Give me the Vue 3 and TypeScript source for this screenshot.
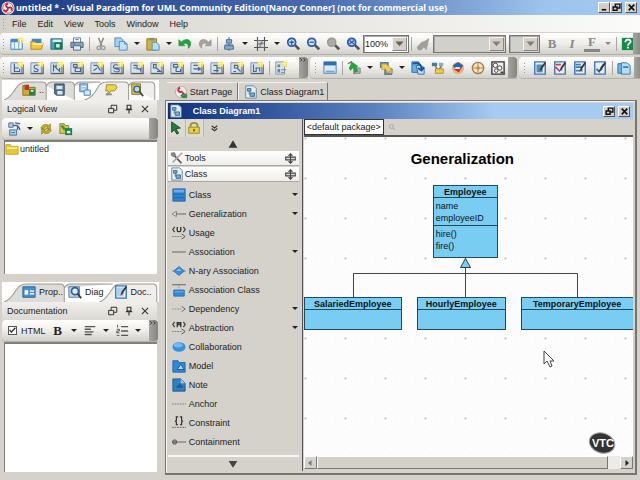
<script setup lang="ts">
import { h, ref } from 'vue'

type Tool = { icon?: string; label?: string; kind?: 'arrow' | 'sep' }

const spark = '<path d="M9 1h6v6l-3-1-3-1z" fill="#f3e25a"/><path d="M12 0v6M9 3h6" stroke="#fff7a8"/>'
const sheet = (inner: string) =>
  `<path d="M1 2h12v12H1z" fill="#d3e2f0" stroke="#7688a0"/><path d="M1 14.5h14V4" fill="none" stroke="#5d6165" stroke-width="1.5"/>${inner}${spark}`
const bluePage = (inner: string) =>
  `<path d="M2 1h12v14H2z" fill="#e4f0fa" stroke="#3c78b4" stroke-width="1.6"/>${inner}`
const ink = (d: string) => `<path d="${d}" fill="none" stroke="#4a6584" stroke-width="1.3"/>`
const lens = (rim: string, glass: string, mark: string) =>
  `<path d="M10 9l5 5" stroke="#555" stroke-width="3"/><circle cx="6.5" cy="6" r="4.5" fill="${glass}" stroke="${rim}" stroke-width="2"/><path d="${mark}" stroke="${rim}" stroke-width="1.5"/>`
const brush = '<path d="M14 2L9 9" stroke="#333" stroke-width="2"/><path d="M9 8l2 2-4 2z" fill="#7a2c20"/>'

const icons: Record<string, string> = {
  logo: '<circle cx="8" cy="8" r="7.5" fill="#f6e9e9"/><circle cx="8" cy="8" r="6" fill="none" stroke="#c8505a"/><path d="M8 8C5 6 5 4 8 3M8 8c3-2 5 0 4 3M8 8c0 3-3 5-5 2" fill="none" stroke="#c02838" stroke-width="2"/>',
  project: '<path d="M1 3h13v11H1z" fill="#eef6fd" stroke="#2f78ba"/><path d="M1 2h13v4H1z" fill="#3f8fd0"/><path d="M5 6v8M10 6v8" stroke="#6c9cc6"/>' + spark,
  open: '<path d="M2 2h11v6H2z" fill="#3d89c6"/><path d="M1 5h5l1 2h8l-2 7H1z" fill="#f0c93c" stroke="#a8851c"/><path d="M3 8h12" stroke="#fdf0a0" stroke-width="2"/>',
  save: '<path d="M1 2h13v12H1z" fill="#4c9ccc" stroke="#2c6898"/><path d="M3 3h10v3H3z" fill="#d7edfb"/><path d="M5 6h9v8H5z" fill="#128046"/><path d="M7 8h4v4H7z" fill="#d5efdb"/>',
  print: '<path d="M4 1h8v6H4z" fill="#fff" stroke="#557794"/><path d="M1 6h14v6H1z" fill="#8fa6b8" stroke="#4b6072"/><path d="M4 10h8v5H4z" fill="#d9ecfa" stroke="#4b6072"/><path d="M6 3h4M3 8h3" stroke="#3c70a0"/>',
  cut: '<path d="M5 1l4 9M11 1L7 10" stroke="#888" stroke-width="1.6"/><circle cx="5.5" cy="12.5" r="2" fill="none" stroke="#999" stroke-width="1.5"/><circle cx="10.5" cy="12.5" r="2" fill="none" stroke="#999" stroke-width="1.5"/>',
  copy: '<path d="M1 1h7l2 2v8H1z" fill="#a8d2f2" stroke="#4c86b8"/><path d="M6 5h6l3 3v7H6z" fill="#c3e2f8" stroke="#4c86b8"/><path d="M12 5v3h3" fill="none" stroke="#4c86b8"/>',
  paste: '<path d="M1 2h11v13H1z" fill="#d6b23a" stroke="#8c7425"/><path d="M4 1h5v3H4z" fill="#888"/><path d="M7 6h5l3 3v6H7z" fill="#b9dcf5" stroke="#4c86b8"/>',
  undo: '<path d="M1 3v7h7L6 8c3-2 6-1 6 5 5-5 2-11-3-10-2 0-4 1-5 3z" fill="#21a536" stroke="#158026" stroke-width=".6"/>',
  redo: '<path d="M15 3v7H8l2-2C7 6 4 7 4 13-1 8 2 2 7 3c2 0 4 1 5 3z" fill="#a2a2a0" stroke="#8a8a88" stroke-width=".6"/>',
  align: '<path d="M8 0v16M3 9h10" stroke="#47637e"/><path d="M5 3h6v4H5zM3 10h10v4H3z" fill="#7fb0d8" stroke="#47637e"/>',
  grid: '<path d="M4 0v16M12 0v16M0 4h16M0 12h16" stroke="#555" stroke-width="1.3"/><path d="M4 4h5v4H4zM7 7h5v5H7z" fill="#cfd4d8" stroke="#666"/>',
  zoomIn: lens('#2a5ca8', '#cfe5fa', 'M4 6h5M6.5 4v5'),
  zoomOut: lens('#2a5ca8', '#cfe5fa', 'M4 6h5'),
  zoomOff: lens('#9a9a98', '#b0b0ae', 'M5 6h3'),
  zoomFit: lens('#2a5ca8', '#b8d5f2', 'M4 4l5 4M9 4L4 8'),
  painter: '<path d="M15 1L9 5H7l-6 6 1 4h4l3-3 3 3 2-8z" fill="#a0a09e"/>',
  help: '<path d="M1 1h14v14H1z" fill="#138a48"/><path d="M5 6c0-4 6-4 6-1 0 2-3 2-3 5M8 11v2" stroke="#fff" stroke-width="2" fill="none"/>',
  d0: sheet(ink('M5 3v5h5M5 8v4h6v-3')),
  d1: sheet(ink('M10 5c-7-2-6 4-3 4 5 1 1 5-3 2')),
  d2: sheet(ink('M4 12V5l7 7V8M7 4v3')),
  d3: sheet(ink('M4 4h4v3H4zM6 8h6v4H6z')),
  d4: sheet(ink('M4 5h4l4 6M4 11l4-3')),
  d5: sheet(ink('M10 5c-7-3-8 4-3 4 7 0 3 6-3 2M4 8h8')),
  d6: sheet(ink('M4 5h4v4h4v3M4 8h3')),
  d7: sheet(ink('M4 4h3v4H4zM7 8l5 4H8')),
  d8: sheet(ink('M4 4h5v3H4zM7 7v5h5V9')),
  d9: sheet(ink('M4 5h5M4 9h8M9 7l3 2-3 2')),
  d10: sheet(ink('M4 5h4v3h4M4 11h6M8 8v5')),
  d11: sheet(ink('M5 5h4v3H5zM8 8l4 4M4 12h3')),
  d12: sheet(ink('M4 4v8h3V8h4v4')),
  d13: '<path d="M2 1h10v14H2z" fill="#d8e3ec" stroke="#8290a0"/><path d="M4 4h3v3H4zM4 9h3v4H4z" fill="#5a87ac"/><path d="M8 10h6M8 13h4" stroke="#777"/>' + spark,
  panel: '<path d="M1 1h14v13H1z" fill="#d8eaf8" stroke="#3b78b2"/><path d="M1 1h14v4H1z" fill="#2e6db2"/><path d="M3 12h10" stroke="#7ba7cc" stroke-width="2"/>',
  exportTree: '<path d="M1 3l4-2v7M8 8v7M8 12h7" stroke="#777" fill="none" stroke-width="1.5"/><path d="M9 8h6v6H9z" fill="#b9bcbc" stroke="#777"/><path d="M2 8l4-7 7 5-2 1 2 5-4 1-2-5-3 3z" fill="#25a43f"/>',
  importTree: '<path d="M2 8V2h8v5M7 8v7h8" stroke="#667a8c" fill="none" stroke-width="2"/><path d="M9 9h6v5H9z" fill="#c2c6c8" stroke="#777"/><path d="M4 3l5 1 4 4 1 3-4 2-3-4-4 1z" fill="#ecd34a" stroke="#9a8420" stroke-width=".6"/>',
  docArrow: '<path d="M1 1h8v12H1z" fill="#6daee0" stroke="#2268aa"/><path d="M6 5h5l4 3v7H8z" fill="#bfe0f8" stroke="#2268aa"/><path d="M2 3c7-2 10 1 10 6M8 8l4 3 3-4" stroke="#164f98" stroke-width="2" fill="none"/>',
  net: '<path d="M1 2h6v4H1z" fill="#4a78a4"/><path d="M9 2h5v4H9z" fill="#8cadc8"/><path d="M5 6l3 5M12 6l-4 5" stroke="#666" stroke-width="1.5"/><path d="M5 9h9v5H5z" fill="#eed04b" stroke="#a28a28"/>',
  palette: '<circle cx="8" cy="8" r="7" fill="#e7b27c"/><path d="M2 5l6-4 6 4-2 3H4z" fill="#2b65ae"/><path d="M3 9l9-1-3 5z" fill="#c8352c"/><path d="M5 8h5" stroke="#fff" stroke-width="2"/>',
  wheel: '<circle cx="8" cy="8" r="6.5" fill="#f4e3c4" stroke="#a8794a" stroke-width="1.5"/><path d="M8 2v12M2 8h12" stroke="#a8794a"/><circle cx="8" cy="8" r="2" fill="#c48d50"/>',
  nodes: '<path d="M1 1h14v14H1z" fill="#eee" stroke="#333" stroke-width="1.5"/><circle cx="5" cy="5" r="2.5" fill="#fff" stroke="#333"/><circle cx="10" cy="8" r="2.5" fill="#fff" stroke="#333"/><circle cx="6" cy="11" r="2" fill="#fff" stroke="#333"/><path d="M11 12h3v2h-3z" fill="#333"/>',
  r0: bluePage('<path d="M4 4h7v9H4z" fill="#4f8fbf"/>' + brush),
  r1: bluePage('<path d="M3 4h6M3 7l5 5" stroke="#cc4054" stroke-width="2"/>' + brush),
  r2: bluePage('<path d="M3 4h6M3 7h8M3 11h8" stroke="#477fb4" stroke-width="2"/>' + brush),
  r3: bluePage('<path d="M4 9l3 3 5-8" stroke="#25669f" stroke-width="2" fill="none"/>' + brush),
  r4: '<path d="M1 3h8v11H1z" fill="#6db3e4" stroke="#2c71aa"/><path d="M5 2h6l4 3v10H5z" fill="#b8dcf5" stroke="#2c71aa"/><path d="M7 7h6" stroke="#3b7db6" stroke-width="2"/>',
  box: '<path d="M1 3h6l1 2h7v9H1z" fill="#d6ac2e" stroke="#7d6a20"/><path d="M3 2h5v6H3z" fill="#b93526"/><path d="M8 7h7v7H8z" fill="#258446"/><path d="M10 9h3" stroke="#e6f5e6" stroke-width="2"/>',
  drive: '<path d="M3 1h11v13H5l-2-2z" fill="#51728f" stroke="#344a5e"/><path d="M5 3h7v4H5zM6 9h6v4H6z" fill="#dce7ee"/>',
  logic: '<path d="M2 1h9v9H2z" fill="#9cc6ea" stroke="#3d78b0"/><path d="M7 8h7v6H7z" fill="#d8ebfa" stroke="#3d78b0"/><path d="M4 4h5M4 7h4" stroke="#fff"/>',
  bubble: '<path d="M3 2h10l2 3-3 4H8l-4 5 1-5H2z" fill="#ead54a" stroke="#9b8820"/><path d="M2 13h7" stroke="#888" stroke-width="2"/>',
  find: '<path d="M2 1h10v12H2z" fill="#d8c154" stroke="#78702c"/><circle cx="8" cy="7" r="3.5" fill="#b8dced" stroke="#3e6073" stroke-width="1.5"/><path d="M11 10l4 5" stroke="#444" stroke-width="2"/>',
  props: '<path d="M1 2h14v12H1z" fill="#4a91d0" stroke="#235a92"/><path d="M3 6h4v5H3z" fill="#fff"/><path d="M9 7h5M9 10h5" stroke="#fff" stroke-width="1.5"/>',
  overview: '<path d="M1 2h12v12H1z" fill="#bdd9f0" stroke="#496f98"/><circle cx="8" cy="7" r="4" fill="#d9edfb" stroke="#315e9c" stroke-width="2"/><path d="M11 10l4 5" stroke="#333" stroke-width="2"/>',
  docs: bluePage('<path d="M3 3h8v10H3z" fill="#a9d2f2"/>' + brush),
  treeView: '<path d="M2 1h5v5H2zM3 9h8v6H3z" fill="#a9cbe7" stroke="#3f6f9d"/><path d="M5 12h4" stroke="#3f6f9d"/><path d="M7 4h5v5M9 1l6 1M13 5l2 4" stroke="#47698a" stroke-width="1.5" fill="none"/>',
  refresh: '<path d="M2 7c2-5 7-5 9-3l2-2v6H8l2-2c-3-1-4 0-5 2zM14 9c-2 5-7 5-9 3l-2 2V8h5l-2 2c3 1 4 0 5-2z" fill="#c0ad26" stroke="#827414" stroke-width=".7"/>',
  saveTree: '<path d="M1 2h5l1 2h4v9H1z" fill="#dec74a" stroke="#857a2c"/><path d="M3 4l4 5" stroke="#3b9748" stroke-width="3"/><path d="M7 7h8v8H7z" fill="#138449"/><path d="M9 10h4v3H9z" fill="#e2f2e5"/>',
  folder: '<path d="M1 3h5l1 2h8v9H1z" fill="#e8c83b" stroke="#c0a024"/><path d="M2 6h12v2H2z" fill="#fbec8c"/>',
  page: '<circle cx="8" cy="8" r="6.5" fill="#f2e7e8" stroke="#cba0a6"/><path d="M8 8C4 8 4 4 7 3M8 7l3 3-3 3" fill="none" stroke="#b92d43" stroke-width="2"/><path d="M9 10h6v5H9z" fill="#3d8a51"/>',
  diagram: '<path d="M2 1h9l3 3v11H2z" fill="#e3eef7" stroke="#64809c"/><path d="M4 4h4v3H4zM7 9h5v4H7zM6 7v4" fill="#7da7cb" stroke="#3c6993"/>',
  pointer: '<path d="M3 1l10 7-5 1 3 5-2 1-3-5-3 3z" fill="#237a44" stroke="#124f28"/>',
  lock: '<path d="M4 7V5c0-4 8-4 8 0v2" fill="none" stroke="#a28f27" stroke-width="2"/><path d="M2 7h12v7H2z" fill="#ead43c" stroke="#93811c"/><path d="M8 9v3" stroke="#6c6114" stroke-width="2"/>',
  tools: '<path d="M3 3l10 11" stroke="#555" stroke-width="2"/><path d="M14 2L3 13" stroke="#aaa" stroke-width="2"/><path d="M1 2l4-1 2 3-3 3-3-2z" fill="#888"/>',
  updown: '<path d="M8 0l4 4H4zM8 16l4-4H4z" fill="#444"/><path d="M1 6h14v4H1z" fill="#ddd" stroke="#444" stroke-width="1.5"/><path d="M8 3v10" stroke="#444" stroke-width="1.5"/>',
  class: '<path d="M1 1h14v14H1z" fill="#2d83d2" stroke="#1d5fa4"/><path d="M2 2h12v3H2z" fill="#66aeea"/><path d="M2 7h12M2 11h12" stroke="#1f68b0"/>',
  generalization: '<path d="M0 8l5-3v6z" fill="#ddd" stroke="#777"/><path d="M5 8h11" stroke="#555"/>',
  usage: '<path d="M3 1L1 4l2 3M13 1l2 3-2 3" stroke="#444" fill="none" stroke-width="1.5"/><path d="M6 1v4c0 2 4 2 4 0V1" fill="none" stroke="#333" stroke-width="1.5"/><path d="M0 12h12" stroke="#777" stroke-dasharray="2 1"/><path d="M11 9l4 3-4 3" stroke="#444" fill="none"/>',
  association: '<path d="M0 8h16" stroke="#555"/>',
  nary: '<path d="M8 3l6 5-6 5-6-5z" fill="#3c91dc" stroke="#226db6"/><path d="M0 8h16" stroke="#4b86ba"/><path d="M5 8l3-3 3 3z" fill="#85c4f4"/>',
  assocClass: '<path d="M0 2h16" stroke="#555"/><path d="M8 3v4" stroke="#777" stroke-dasharray="1 1"/><path d="M2 8h12v7H2z" fill="#3189d7" stroke="#2770b4"/><path d="M3 10h10" stroke="#78bcf0"/>',
  dependency: '<path d="M0 8h12" stroke="#888" stroke-dasharray="2 1"/><path d="M11 5l4 3-4 3" fill="#ddd" stroke="#555"/>',
  abstraction: '<path d="M3 1L1 4l2 3M13 1l2 3-2 3" stroke="#444" fill="none" stroke-width="1.5"/><path d="M6 7V2h4v5M6 4h4" fill="none" stroke="#333" stroke-width="1.5"/><path d="M0 12h12" stroke="#777" stroke-dasharray="2 1"/><path d="M11 9l4 3-4 3" stroke="#444" fill="none"/>',
  collaboration: '<ellipse cx="8" cy="8" rx="7.5" ry="5.5" fill="#3791dc"/><ellipse cx="7" cy="6" rx="5" ry="2.5" fill="#72b9ef"/>',
  model: '<path d="M1 2h6l1 2h7v11H1z" fill="#3189d6" stroke="#1b62a6"/><path d="M6 12l4-6 4 6z" fill="#a7d6fa" stroke="#14528e"/>',
  note: '<path d="M1 1h9l5 5v9H1z" fill="#347fc0" stroke="#1c578e"/><path d="M10 1v5h5" fill="#9bcaf0"/><path d="M4 11l5-5 4 5z" fill="#1d5d99"/>',
  anchor: '<path d="M0 8h16" stroke="#777" stroke-dasharray="2 1"/>',
  constraint: '<path d="M7 1H5v4L4 6l1 1v3h2M9 1h2v4l1 1-1 1v3H9" stroke="#333" fill="none" stroke-width="1.4"/><path d="M0 13h16" stroke="#555" stroke-dasharray="2 1"/>',
  containment: '<circle cx="3" cy="8" r="2.5" fill="#999" stroke="#555"/><path d="M5 8h11M1 8h4" stroke="#555"/>',
  float: '<path d="M5 2h9v8H5z" fill="none" stroke="#333" stroke-width="1.6"/><path d="M1 7h8v7H1z" fill="#e5e4df" stroke="#333" stroke-width="1.6"/>',
  pin: '<path d="M5 2h6v6H5zM3 9h10M8 9v6" fill="none" stroke="#333" stroke-width="1.8"/>',
  close: '<path d="M3 3l10 10M13 3L3 13" stroke="#333" stroke-width="1.7"/>',
  closeBold: '<path d="M3 3l10 10M13 3L3 13" stroke="#111" stroke-width="3"/>',
  minimize: '<path d="M3 12h8" stroke="#111" stroke-width="3"/>',
  restore: '<path d="M6 2h8v7H6z" fill="none" stroke="#111" stroke-width="2.5"/><path d="M2 7h7v6H2z" fill="#d4d0c8" stroke="#111" stroke-width="2.5"/>',
  left: '<path d="M2 3h12M2 6h7M2 9h10M2 12h8" stroke="#555" stroke-width="1.5"/>',
  list: '<path d="M3 1v3M2 6h3v2H2v2h3M2 13h3" stroke="#444" fill="none"/><path d="M7 3h8M7 8h8M7 13h8" stroke="#555" stroke-width="1.5"/>',
  down: '<path d="M2 5h12l-6 7z" fill="#333"/>',
  up: '<path d="M1 14h14L8 2z" fill="#333"/>',
  downBig: '<path d="M1 3h14L8 14z" fill="#444"/>',
  rightTri: '<path d="M5 2v12l7-6z" fill="#222"/>',
  leftTri: '<path d="M11 2v12L4 8z" fill="#777"/>',
  more: '<path d="M3 3l5 4 5-4M3 8l5 4 5-4" fill="none" stroke="#333" stroke-width="2"/>',
  chevrons: '<path d="M2 2l3 3-3 3M8 2l3 3-3 3" fill="none" stroke="#333" stroke-width="1.6"/>',
  search: '<circle cx="7" cy="7" r="4" fill="none" stroke="#999" stroke-width="1.5"/><path d="M10 10l4 4" stroke="#999" stroke-width="1.5"/>',
  check: '<path d="M3 7l3 4 7-8" fill="none" stroke="#333" stroke-width="2.5"/>',
}

const Icon = (_: unknown, { attrs }: { attrs: Record<string, unknown> }) =>
  h('svg', { viewBox: '0 0 16 16', class: 'icon', 'aria-hidden': 'true', innerHTML: icons[attrs.name as string] })

const t = (icon: string, label: string): Tool => ({ icon, label })
const arrow: Tool = { kind: 'arrow' }
const sep: Tool = { kind: 'sep' }

const menus = ['File', 'Edit', 'View', 'Tools', 'Window', 'Help']
const mainTools: Tool[] = [
  t('project', 'New project'), t('open', 'Open'), t('save', 'Save'), t('print', 'Print'), sep,
  t('cut', 'Cut'), t('copy', 'Copy'), arrow, t('paste', 'Paste'), arrow, t('undo', 'Undo'), t('redo', 'Redo'), sep,
  t('align', 'Align'), arrow, t('grid', 'Grid'), arrow,
  t('zoomIn', 'Zoom in'), t('zoomOut', 'Zoom out'), t('zoomOff', 'Actual size'), t('zoomFit', 'Fit'),
]
const diagramTools: Tool[] = [
  ...Array.from({ length: 13 }, (_, i) => t('d' + i, 'New diagram ' + (i + 1))), sep, t('d13', 'New diagram'),
]
const modelTools: Tool[] = [
  t('panel', 'Panel'), sep, t('exportTree', 'Export'), arrow, t('importTree', 'Import'), arrow,
  t('docArrow', 'Report'), t('net', 'Network'), t('palette', 'Colours'), t('wheel', 'Navigator'), t('nodes', 'Layout'),
]
const reportTools: Tool[] = [
  t('r0', 'Edit'), t('r1', 'Mark'), t('r2', 'Text'), t('r3', 'Verify'), sep, t('r4', 'Copy report'),
]
const palette = [
  { icon: 'class', name: 'Class', more: true },
  { icon: 'generalization', name: 'Generalization', more: true },
  { icon: 'usage', name: 'Usage' },
  { icon: 'association', name: 'Association', more: true },
  { icon: 'nary', name: 'N-ary Association' },
  { icon: 'assocClass', name: 'Association Class' },
  { icon: 'dependency', name: 'Dependency', more: true },
  { icon: 'abstraction', name: 'Abstraction', more: true },
  { icon: 'collaboration', name: 'Collaboration' },
  { icon: 'model', name: 'Model' },
  { icon: 'note', name: 'Note' },
  { icon: 'anchor', name: 'Anchor' },
  { icon: 'constraint', name: 'Constraint' },
  { icon: 'containment', name: 'Containment' },
]
const bars = [
  { key: 'diagram', tools: diagramTools },
  { key: 'model', tools: modelTools },
  { key: 'report', tools: reportTools },
]
const html = ref(true)
const notes = ref('')
</script>

<template>
  <div class="app">
    <header class="titlebar main">
      <Icon name="logo" />
      <h1>untitled * - Visual Paradigm for UML Community Edition[Nancy Conner] (not for commercial use)</h1>
      <button class="winbtn" aria-label="Minimize"><Icon name="minimize" /></button>
      <button class="winbtn" aria-label="Restore"><Icon name="restore" /></button>
      <button class="winbtn apart" aria-label="Close"><Icon name="closeBold" /></button>
    </header>

    <nav class="menubar">
      <i class="grip"></i>
      <button v-for="m in menus" :key="m">{{ m }}</button>
    </nav>

    <div class="toolrow">
      <div class="toolbar wide">
        <i class="grip"></i>
        <template v-for="(x, i) in mainTools" :key="i">
          <button v-if="x.icon" class="tool" :aria-label="x.label"><Icon :name="x.icon" /></button>
          <i v-else :class="x.kind"></i>
        </template>
        <span class="combo zoom">
          <select aria-label="Zoom"><option>100%</option></select><span class="drop"><Icon name="down" /></span>
        </span>
        <i class="sep"></i>
        <button class="tool" aria-label="Format painter"><Icon name="painter" /></button>
        <span class="combo off font"><select aria-label="Font" disabled></select><span class="drop"><Icon name="down" /></span></span>
        <span class="combo off size"><select aria-label="Font size" disabled></select><span class="drop"><Icon name="down" /></span></span>
        <button class="tool letter">B</button>
        <button class="tool letter italic">I</button>
        <button class="tool letter under">F</button>
        <i class="arrow faded"></i>
        <i class="sep"></i>
        <button class="tool help" aria-label="Help"><Icon name="help" /></button>
        <span class="cap"></span>
      </div>
    </div>

    <div class="toolrow">
      <div v-for="b in bars" :key="b.key" class="toolbar" :class="b.key">
        <i class="grip"></i>
        <template v-for="(x, i) in b.tools" :key="i">
          <button v-if="x.icon" class="tool" :aria-label="x.label"><Icon :name="x.icon" /></button>
          <i v-else :class="x.kind"></i>
        </template>
        <span class="cap"><Icon v-if="b.key === 'diagram'" name="chevrons" /></span>
      </div>
    </div>

    <main class="work">
      <aside class="side">
        <section class="pane top">
          <div class="tabs">
            <svg class="tabshape" viewBox="0 0 156 20" preserveAspectRatio="none" aria-hidden="true">
              <path d="M2 20Q8 18 14 8 18 2 24 2H40Q44 2 44 6V20M44 6Q46 2 50 2H68Q72 2 72 6V20M72 6Q74 2 78 2H98" />
              <path class="front" d="M82 20Q90 18 95 8 98 2 104 2H122Q126 2 126 6V20M126 6Q128 2 132 2H148Q152 2 152 6V20" />
            </svg>
            <button class="tab first" aria-label="Project browser"><Icon name="box" />..</button>
            <button class="tab" aria-label="Repository"><Icon name="drive" /></button>
            <button class="tab" aria-label="Class repository"><Icon name="logic" /></button>
            <button class="tab" aria-label="Logical view"><Icon name="bubble" /></button>
            <button class="tab" aria-label="Find"><Icon name="find" /></button>
          </div>
          <div class="panehead">
            <h2>Logical View</h2>
            <button aria-label="Float"><Icon name="float" /></button>
            <button aria-label="Pin"><Icon name="pin" /></button>
            <button aria-label="Close"><Icon name="close" /></button>
          </div>
          <div class="toolbar mini">
            <button class="tool" aria-label="View"><Icon name="treeView" /></button>
            <i class="arrow"></i>
            <button class="tool" aria-label="Refresh"><Icon name="refresh" /></button>
            <button class="tool" aria-label="Save view"><Icon name="saveTree" /></button>
            <span class="cap"></span>
          </div>
          <ul class="tree">
            <li><Icon name="folder" />untitled</li>
          </ul>
        </section>

        <section class="pane bottom">
          <div class="tabs named">
            <svg class="tabshape" viewBox="0 0 156 20" preserveAspectRatio="none" aria-hidden="true">
              <path d="M2 20Q8 18 14 8 18 2 24 2H58Q62 2 62 6V20M62 6Q64 2 68 2H110" />
              <path class="front" d="M97 20Q103 18 109 8 112 2 118 2H150Q154 2 154 6V20" />
            </svg>
            <button class="tab first"><Icon name="props" />Prop..</button>
            <button class="tab"><Icon name="overview" />Diag</button>
            <button class="tab last"><Icon name="docs" />Doc..</button>
          </div>
          <div class="panehead">
            <h2>Documentation</h2>
            <button aria-label="Float"><Icon name="float" /></button>
            <button aria-label="Pin"><Icon name="pin" /></button>
            <button aria-label="Close"><Icon name="close" /></button>
          </div>
          <div class="toolbar mini">
            <label class="tick"><input v-model="html" type="checkbox" /><Icon v-if="html" name="check" />HTML</label>
            <button class="tool letter dark">B</button>
            <i class="arrow"></i>
            <button class="tool" aria-label="Align text"><Icon name="left" /></button>
            <i class="arrow"></i>
            <button class="tool" aria-label="List"><Icon name="list" /></button>
            <i class="arrow"></i>
            <span class="cap"><Icon name="chevrons" /></span>
          </div>
          <textarea v-model="notes" aria-label="Documentation"></textarea>
        </section>
      </aside>

      <section class="editor">
        <div class="doctabs">
          <button><Icon name="page" />Start Page</button>
          <button class="current"><Icon name="diagram" />Class Diagram1</button>
        </div>
        <div class="window">
          <header class="titlebar inner">
            <Icon name="diagram" />
            <h2>Class Diagram1</h2>
            <button class="winbtn" aria-label="Restore"><Icon name="restore" /></button>
            <button class="winbtn apart" aria-label="Close"><Icon name="closeBold" /></button>
          </header>
          <div class="body">
            <div class="palette">
              <div class="modes">
                <button class="on" aria-label="Select"><Icon name="pointer" /></button>
                <button class="on" aria-label="Lock"><Icon name="lock" /></button>
                <button class="more" aria-label="More"><Icon name="more" /></button>
              </div>
              <button class="scroller" aria-label="Scroll up"><Icon name="up" /></button>
              <button class="group"><Icon name="tools" /><span>Tools</span><Icon name="updown" /></button>
              <button class="group"><Icon name="diagram" /><span>Class</span><Icon name="updown" /></button>
              <div class="items">
                <button v-for="p in palette" :key="p.name">
                  <Icon :name="p.icon" /><span>{{ p.name }}</span><i v-if="p.more" class="arrow"></i>
                </button>
              </div>
              <div class="edge"></div>
              <button class="scroller" aria-label="Scroll down"><Icon name="downBig" /></button>
            </div>

            <div class="sheet">
              <div class="package"><span>&lt;default package&gt;</span><Icon name="search" /></div>
              <div class="canvas">
                <svg class="lines" aria-hidden="true">
                  <defs>
                    <pattern id="dots" width="40" height="40" patternUnits="userSpaceOnUse">
                      <path d="M0 1.5h3M1.5 0v3" stroke="#d2d2d2" />
                      <path d="M11 1.5h1M21 1.5h1M31 1.5h1M1 11.5h1M1 21.5h1M1 31.5h1M21 21.5h1" stroke="#ececec" />
                    </pattern>
                  </defs>
                  <rect width="100%" height="100%" fill="url(#dots)" />
                  <path d="M161.5 130v37M49.5 167v-30.500H273.5V167" fill="none" stroke="#444" />
                  <path d="M161.5 121.5l5 9h-10z" fill="#7acdf2" stroke="#22404e" />
                </svg>
                <h3 class="caption">Generalization</h3>
                <article class="uml employee">
                  <h4>Employee</h4>
                  <ul><li>name</li><li>employeeID</li></ul>
                  <ul><li>hire()</li><li>fire()</li></ul>
                </article>
                <article class="uml salaried"><h4>SalariedEmployee</h4></article>
                <article class="uml hourly"><h4>HourlyEmployee</h4></article>
                <article class="uml temporary"><h4>TemporaryEmployee</h4></article>
                <svg class="cursor" viewBox="0 0 12 18" aria-hidden="true">
                  <path d="M1 1v13l3-3 3 6 2-1-2-5h4z" fill="#fff" stroke="#444" />
                </svg>
                <svg class="badge" viewBox="0 0 28 24" role="img" aria-label="VTC">
                  <ellipse cx="14" cy="12" rx="13" ry="10" transform="rotate(18 14 12)" fill="#333" stroke="#aaa" />
                  <text x="15" y="16" text-anchor="middle">VTC</text>
                </svg>
              </div>
              <div class="hscroll">
                <button aria-label="Scroll left"><Icon name="leftTri" /></button>
                <span class="thumb"></span><span class="track"></span>
                <button aria-label="Scroll right"><Icon name="rightTri" /></button>
              </div>
            </div>
          </div>
        </div>
      </section>
    </main>
  </div>
</template>

<style>
body { background: #d4d2cb; }
</style>

<style scoped>
.app { display: flex; flex-direction: column; height: 100vh; overflow: hidden; box-sizing: border-box; padding-bottom: 5px; background: #d4d2cb; color: #222; font: 9px/12px "Liberation Sans", Arial, sans-serif; }
.app :deep(.icon) { display: block; flex: none; width: 14px; height: 14px; }
.app *, .app *::before { box-sizing: border-box; }
button { display: flex; align-items: center; justify-content: center; margin: 0; padding: 0; border: 0; background: none; color: inherit; font: inherit; white-space: nowrap; }
h1, h2, h3, h4, ul { margin: 0; padding: 0; font: inherit; list-style: none; }

.titlebar { display: flex; flex: none; align-items: center; height: 15px; padding: 0 3px 0 1px; background: linear-gradient(90deg, #1c3c84, #4a6cae 50%, #9cc4ec 85%, #a6caf0); color: #fff; }
.titlebar h1, .titlebar h2 { flex: 1; padding-left: 1px; font-weight: bold; white-space: nowrap; }
.main h1 { font-family: "Noto Sans", "Liberation Sans", sans-serif; }
.winbtn { width: 12px; height: 11px; border: 1px solid; border-color: #fff #555 #555 #fff; background: #d4d0c8; }
.winbtn :deep(.icon) { width: 9px; height: 9px; }
.winbtn.apart { margin-left: 3px; }

.grip { flex: none; width: 3px; height: 12px; margin: 0 2px; background: radial-gradient(circle, #999 1px, transparent 1px) 0 0 / 3px 3px; }
.menubar { display: flex; flex: none; align-items: center; gap: 11px; height: 17px; background: linear-gradient(90deg, #d4d2cb, #e8e7e3 50%, #fbfbfa); }
.menubar .grip { margin-right: -4px; }

.toolrow { display: flex; flex: none; gap: 2px; height: 24px; padding-top: 1px; }
.toolbar { display: flex; flex: 0 0 auto; align-items: center; height: 22px; border-radius: 4px 0 0 4px; background: linear-gradient(#fff, #f1f0ed 45%, #d2d0ca); border-bottom: 1px solid #b4b2ac; }
.toolbar.wide, .toolbar.report { flex: 1; }
.tool { flex: none; width: 20px; height: 20px; }
.tool.help { width: 12px; margin-left: 3px; justify-content: flex-start; overflow: hidden; }
.arrow { flex: none; width: 12px; height: 4px; }
.arrow::before { content: ""; display: block; width: 0; margin: auto; border: 3px solid transparent; border-top-color: #222; border-bottom: 0; }
.arrow.faded { opacity: .5; }
.sep { flex: none; width: 1px; height: 14px; margin: 0 1px 0 2px; background: #aaa8a2; }
.cap { flex: none; align-self: stretch; width: 9px; margin-left: auto; border-radius: 0 3px 3px 0; background: linear-gradient(90deg, #a5a49f, #858580); }
.cap :deep(.icon) { width: 9px; height: 9px; }
.diagram .cap { margin-left: 8px; }
.model .grip { margin: 0 3px 0 4px; }
.report .grip { margin: 0 4px; }
.combo { display: flex; flex: none; height: 18px; border: 1px solid #77756f; background: #fff; box-shadow: inset 1px 1px #aaa; }
.combo select { flex: 1; min-width: 0; padding: 0 1px; border: 0; appearance: none; background: none; color: #222; font: inherit; }
.drop { display: flex; align-items: center; justify-content: center; width: 15px; margin: 1px; border: 1px solid; border-color: #f5f4f0 #888 #888 #f5f4f0; background: #d4d0c8; }
.drop :deep(.icon) { width: 11px; height: 11px; }
.zoom :deep(.icon) { opacity: .7; }
.combo.off { background: #d2d0ca; }
.combo.off :deep(.icon) { opacity: .5; }
.zoom { width: 46px; }
.font { width: 73px; }
.size { width: 31px; margin: 0 2px 0 3px; }
.letter { color: #8b8a86; font: bold 13px/16px "Liberation Serif", serif; }
.letter.italic { font-style: italic; }
.letter.under { width: 16px; height: 16px; margin: 0 2px; border-bottom: 3px solid #888; line-height: 12px; }
.letter.dark { color: #222; }

.work { display: flex; flex: 1; gap: 4px; min-height: 0; padding: 0 3px 0 2px; }
.side { display: flex; flex: 0 0 25%; flex-direction: column; gap: 8px; padding: 0 2px 3px 0; }
.pane { display: flex; flex: 1 1 0; flex-direction: column; min-height: 0; }
.pane.top { flex-grow: 194; }
.pane.bottom { flex-grow: 190; }
.tabs { position: relative; display: flex; flex: none; align-items: center; height: 20px; padding-left: 18px; background: #fff; gap: 12px; }
.tabs.named { gap: 5px; }
.tabshape { position: absolute; inset: 0; width: 100%; height: 100%; }
.tabshape path { fill: #dddcd6; stroke: #9a9993; }
.tabshape .front { fill: #efeeeb; }
.tab { position: relative; gap: 3px; height: 18px; }
.tab.first { margin-left: 2px; margin-right: -4px; }
.named .tab.first { margin-right: 0; }
.tab.last { margin-left: 5px; }
.panehead { display: flex; flex: none; align-items: center; height: 18px; margin-right: 2px; padding: 0 7px 0 5px; gap: 6px; background: linear-gradient(#f0efec, #dbd9d3); }
.panehead h2 { flex: 1; }
.panehead :deep(.icon) { width: 10px; height: 10px; }
.mini { margin-right: 1px; }
.mini .tool:first-child { margin-left: 2px; }
.tree, textarea { flex: 1; min-height: 0; margin: 0 2px; border: solid #807f7a; border-width: 2px 0 0 1px; background: #fff; }
.tree li { display: flex; align-items: center; gap: 1px; height: 14px; }
textarea { display: block; padding: 2px; resize: none; font: inherit; outline: 0; border-radius: 0; }
.tick { position: relative; display: flex; align-items: center; gap: 4px; margin: 0 2px 0 6px; }
.tick input { width: 9px; height: 9px; margin: 0; border: 1px solid #555; appearance: none; background: #fff; }
.tick :deep(.icon) { position: absolute; left: 0; width: 9px; height: 9px; }

.editor { display: flex; flex: 1; flex-direction: column; min-width: 0; padding-top: 2px; }
.doctabs { display: flex; flex: none; height: 18px; padding-left: 2px; }
.doctabs button { gap: 2px; padding: 0 5px 0 7px; border-right: 1px solid #777; border-top: 1px solid #eee; }
.doctabs .current { padding: 0 3px 0 5px; border-left: 1px solid #f4f3f0; }
.window { display: flex; flex: 1; flex-direction: column; min-height: 0; padding: 2px; border: 1px solid #77756f; border-right-width: 2px; border-bottom-width: 2px; background: #d4d2cb; box-shadow: inset 1px 1px #f5f4f1; }
.inner { height: 16px; background: linear-gradient(90deg, #10307c, #5c82c0 45%, #a6caf0 70%); }
.inner h2 { padding-left: 10px; }
.body { display: flex; flex: 1; min-height: 0; }
.palette { display: flex; flex: 0 0 29%; flex-direction: column; padding-right: 3px; border-right: 1px solid #555; }
.modes { display: flex; flex: none; height: 18px; }
.modes button { width: 18px; }
.modes .on { border-right: 1px solid #b8b6b0; background: #dcdad3; }
.modes .more { width: 22px; }
.more :deep(.icon) { width: 9px; height: 9px; }
.scroller { flex: none; height: 14px; }
.scroller :deep(.icon) { width: 10px; height: 10px; }
.group { flex: none; height: 15px; margin-bottom: 1px; padding: 0 3px 0 2px; gap: 1px; border-bottom: 1px solid #aaa8a2; background: linear-gradient(#fff, #eeede9); }
.group span, .items span { flex: 1; text-align: left; }
.group :deep(.icon:last-child) { width: 11px; height: 11px; }
.items { display: grid; flex: 1; grid-auto-rows: 1fr; min-height: 0; padding: 2px 0 3px; }
.items button { padding: 0 0 0 4px; gap: 3px; min-height: 0; }
.items .arrow { width: 8px; }
.edge { flex: none; height: 2px; background: #f8f8f6; }

.sheet { display: flex; flex: 1; flex-direction: column; min-width: 0; margin: 0 0 2px 1px; }
.package { display: flex; flex: none; align-items: center; gap: 4px; height: 18px; border-bottom: 2px solid #555; }
.package span { height: 16px; padding: 1px 2px; border: 1px solid #333; background: #fff; }
.package :deep(.icon) { width: 8px; height: 8px; }
.canvas { position: relative; flex: 1; min-height: 0; overflow: hidden; background: #fcfcfc; }
.lines { position: absolute; inset: 0; width: 100%; height: 100%; }
.caption { position: absolute; left: 107px; top: 14px; color: #000; font-size: 15px; line-height: 16px; font-weight: bold; white-space: nowrap; }
.uml { position: absolute; border: 1px solid #234a5c; background: #7acdf2; color: #111; }
.uml h4 { height: 12px; border-bottom: 1px solid #234a5c; font-size: 9px; line-height: 12px; font-weight: bold; text-align: center; }
.uml ul { height: 27px; padding: 2px 2px 0; }
.uml ul + ul { border-top: 1px solid #234a5c; height: 32px; }
.uml li { line-height: 12px; }
.employee { left: 129px; top: 48px; width: 65px; }
.salaried, .hourly, .temporary { top: 160px; height: 33px; }
.salaried { left: 0; width: 98px; }
.hourly { left: 113px; width: 89px; }
.temporary { left: 217px; width: 113px; }
.cursor { position: absolute; left: 239px; top: 213px; width: 12px; height: 18px; }
.badge { position: absolute; left: 284px; top: 294px; width: 28px; height: 24px; }
.badge text { fill: #fff; font: bold 11px "Liberation Sans", sans-serif; }
.hscroll { display: flex; flex: none; height: 13px; background: #ecebe7; }
.hscroll button { width: 13px; border: 1px solid; border-color: #fff #777 #777 #fff; background: #d4d2cb; }
.hscroll :deep(.icon) { width: 8px; height: 8px; }
.thumb { flex: 1; border: 1px solid; border-color: #fff #777 #777 #fff; background: #d2d0c8; }
.track { width: 12px; }
</style>
